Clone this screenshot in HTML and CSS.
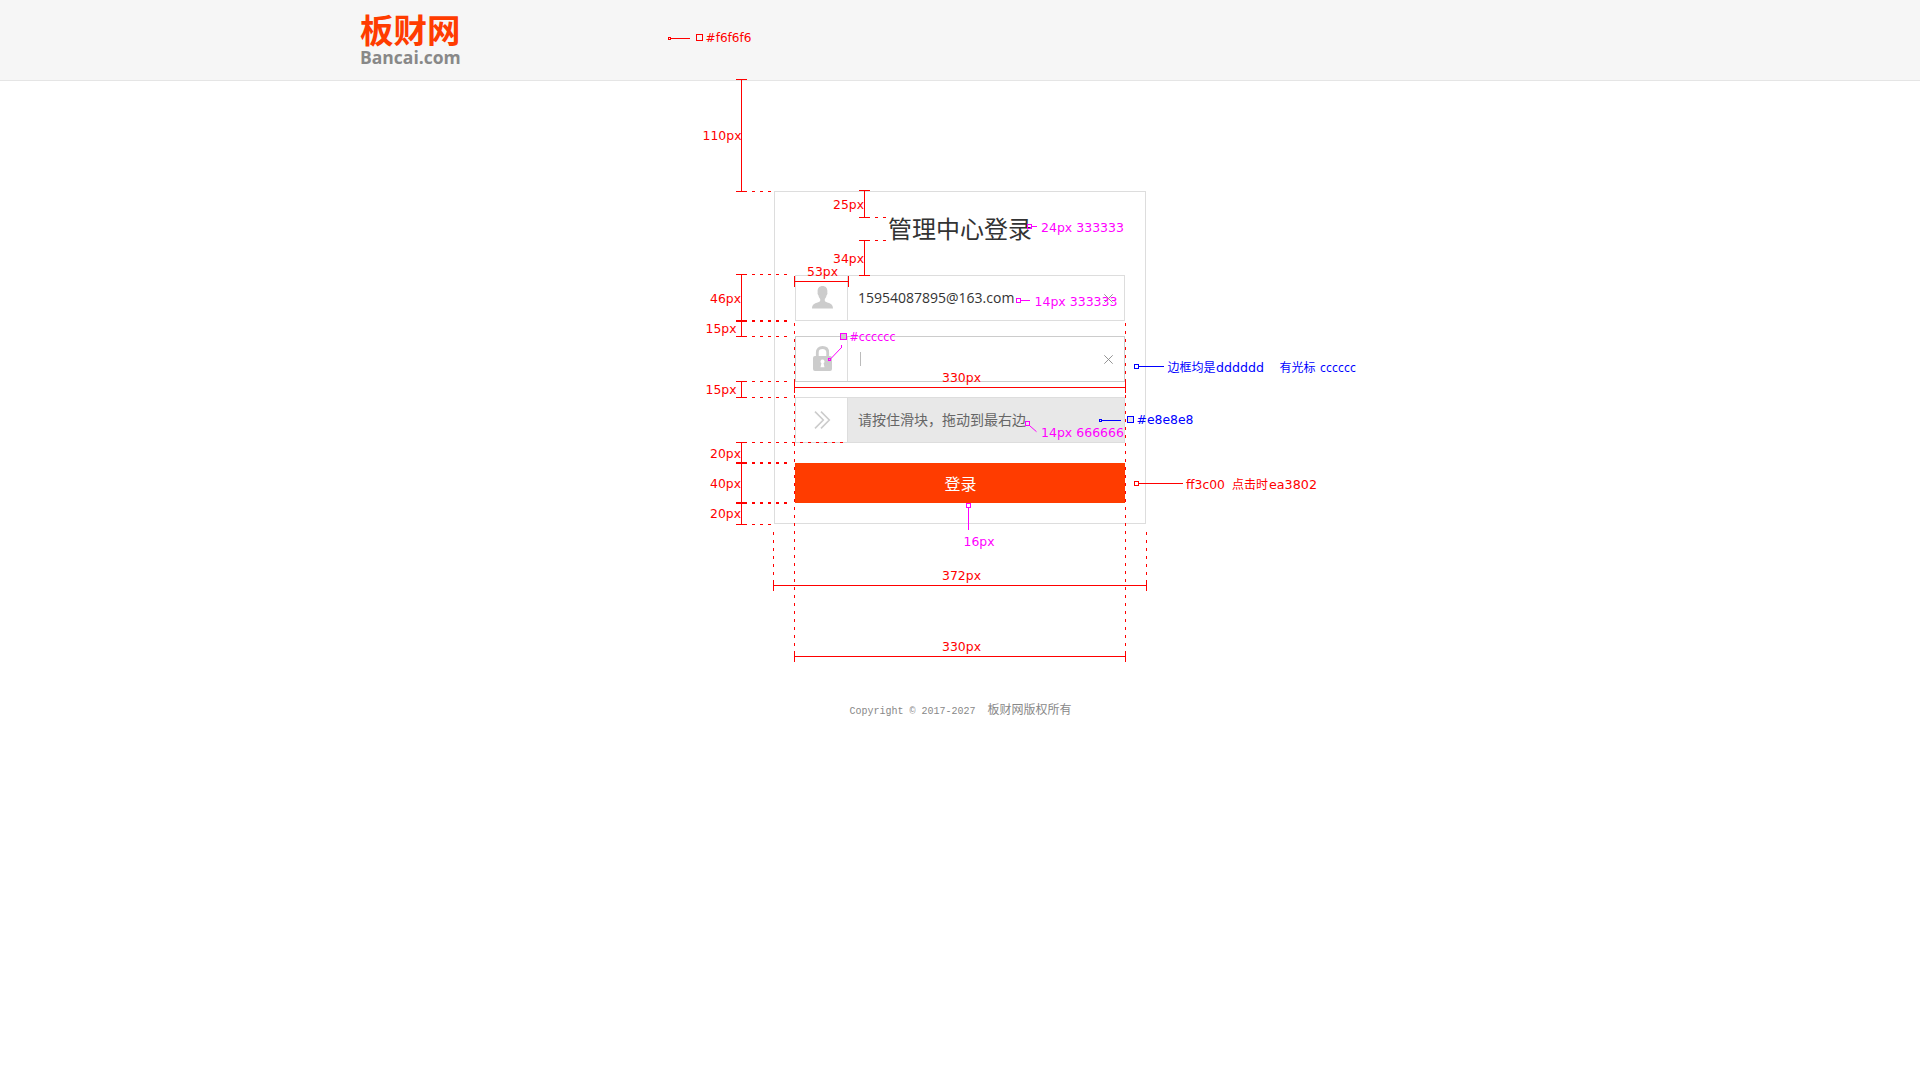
FILE: index.html
```html
<!DOCTYPE html>
<html lang="zh-CN">
<head>
<meta charset="utf-8">
<title>管理中心登录</title>
<link rel="stylesheet" href="styles.css">
</head>
<body>
<header class="header">
  <div class="container">
    <div class="logo">
      <span class="logo-name">板财网</span>
      <span class="logo-domain">Bancai.com</span>
    </div>
  </div>
</header>

<main class="login">
  <h1 class="login-title">管理中心登录</h1>
  <div class="field">
    <span class="field-icon">
      <svg width="21" height="23" viewBox="0 0 21 23"><path fill="#ccc" d="M10.5 0C7.300 0 5.500 2.200 5.600 5.300c.1 1 .1 1.400-.1 2 .1 1.100.5 1.800 1 2.200.3 1.700.9 2.700 1.700 3.500v1.800c-.5 1-1.700 1.500-3.200 2C2 17.800.300 18.500 0 22.500h21c-.3-4-2-4.700-5-5.700-1.500-.5-2.700-1-3.200-2V13c.8-.8 1.400-1.800 1.700-3.500.5-.4.900-1.100 1-2.200-.2-.6-.2-1-.1-2C15.500 2.200 13.700 0 10.500 0z"/></svg>
    </span>
    <span class="field-value">15954087895@163.com</span>
    <svg class="clear" width="9" height="9" viewBox="0 0 9 9"><path d="M.3.3l8.400 8.400M8.700.3L.3 8.700"/></svg>
  </div>
  <div class="field field-focus">
    <span class="field-icon">
      <svg width="19" height="25" viewBox="0 0 19 25"><path fill="none" stroke="#ccc" stroke-width="2.800" d="M4.300 11V6.500c0-3.300 2-5 5.200-5s5.200 1.700 5.200 5V11"/><path fill="#ccc" fill-rule="evenodd" d="M2 10h15q2 0 2 2v11q0 2-2 2H2q-2 0-2-2V12q0-2 2-2zM9.500 13.500a2 2 0 0 0-1.100 3.700L7.500 21.300h4l-.9-4.100A2 2 0 0 0 9.500 13.500z"/></svg>
    </span>
    <span class="field-value"><i class="caret"></i></span>
    <svg class="clear" width="9" height="9" viewBox="0 0 9 9"><path d="M.3.3l8.400 8.400M8.700.3L.3 8.700"/></svg>
  </div>
  <div class="field field-slider">
    <span class="field-icon slider-handle">
      <svg width="17" height="18" viewBox="0 0 17 18"><path fill="none" stroke="#ccc" stroke-width="1.600" d="M1 .6L9.300 9 1 17.400M7 .6L15.300 9 7 17.400"/></svg>
    </span>
    <span class="field-value">请按住滑块，拖动到最右边</span>
  </div>
  <button class="submit" type="button">登录</button>
</main>

<footer class="footer"><span class="footer-latin">Copyright © 2017-2027&nbsp; </span>板财网版权所有</footer>

<svg class="notes" width="1920" height="1080" viewBox="0 0 1920 1080">
  <g class="lines red">
    <path d="M741.5 79V192M736 79.5h11M736 191.500h11"/>
    <path d="M864.5 190v28M859 190.500h11M859 217.500h11"/>
    <path d="M864.5 240v36M859 240.500h11M859 275.500h11"/>
    <path d="M794 281.500h55M794.5 276v11M848.5 276v11"/>
    <path d="M741.5 274v63M736 274.500h11M736 320.500h11M736 321.500h11M736 336.500h11"/>
    <path d="M741.5 381v17M736 381.500h11M736 397.500h11"/>
    <path d="M741.5 442v83M736 442.500h11M736 462.500h11M736 463.500h11M736 502.500h11M736 503.500h11M736 524.500h11"/>
    <path d="M794 387.500h332M794.5 382v11M1125.500 380v13"/>
    <path d="M773 585.500h374M773.5 580v11M1146.500 580v11"/>
    <path d="M794 656.500h332M794.5 651v11M1125.500 651v11"/>
    <path class="dash" d="M744 191.500h27M867 217.500h19M867 240.500h19M744 274.500h43M744 320.500h43M744 321.500h43M744 336.500h43M744 381.500h43M744 397.500h43M744 442.500h99M744 462.500h43M744 463.500h43M744 502.500h43M744 503.500h43M744 524.500h27"/>
    <path class="dash" d="M794.5 323v328M1125.500 323v328M773.5 532v48M1146.500 532v48"/>
    <path d="M668.5 37.500h2v2h-2zM671 38.500h19M696.500 34.500h6v6h-6z"/>
    <path d="M1134.500 481.500h4v4h-4zM1139 483.500h44"/>
  </g>
  <g class="lines magenta">
    <path d="M1027.500 224.500h4v4h-4zM1032 226.500h5"/>
    <path d="M1016.500 298.500h4v4h-4zM1021 300.500h9"/>
    <path d="M828.5 358.500h2v2h-2zM841.5 348V345"/>
    <path class="diagonal" d="M831 358.500L841.500 347.500"/>
    <path fill="#ccc" d="M840.5 333.500h6v6h-6z"/>
    <path d="M1025.500 421.500h4v4h-4z"/>
    <path class="diagonal" d="M1030 426L1036.500 431.700"/>
    <path d="M966.500 503.500h4v4h-4zM968.500 508v22"/>
  </g>
  <g class="lines blue">
    <path d="M1134.500 364.500h4v4h-4zM1139 366.500h25"/>
    <path d="M1099.500 419.500h2v2h-2zM1102 420.500h19"/>
    <path fill="#e8e8e8" d="M1127.500 416.500h6v6h-6z"/>
  </g>
  <g class="labels red-text">
    <text x="705.500" y="42" textLength="46" lengthAdjust="spacingAndGlyphs">#f6f6f6</text>
    <text x="702.500" y="140" textLength="39" lengthAdjust="spacingAndGlyphs">110px</text>
    <text x="833" y="209" textLength="31" lengthAdjust="spacingAndGlyphs">25px</text>
    <text x="833" y="263" textLength="31" lengthAdjust="spacingAndGlyphs">34px</text>
    <text x="807" y="276" textLength="31" lengthAdjust="spacingAndGlyphs">53px</text>
    <text x="710" y="303" textLength="31" lengthAdjust="spacingAndGlyphs">46px</text>
    <text x="705.500" y="333" textLength="31" lengthAdjust="spacingAndGlyphs">15px</text>
    <text x="705.500" y="394" textLength="31" lengthAdjust="spacingAndGlyphs">15px</text>
    <text x="710" y="458" textLength="31" lengthAdjust="spacingAndGlyphs">20px</text>
    <text x="710" y="488" textLength="31" lengthAdjust="spacingAndGlyphs">40px</text>
    <text x="710" y="518" textLength="31" lengthAdjust="spacingAndGlyphs">20px</text>
    <text x="942" y="382" textLength="39" lengthAdjust="spacingAndGlyphs">330px</text>
    <text x="942" y="580" textLength="39" lengthAdjust="spacingAndGlyphs">372px</text>
    <text x="942" y="651" textLength="39" lengthAdjust="spacingAndGlyphs">330px</text>
    <text x="1186" y="489" textLength="39" lengthAdjust="spacingAndGlyphs">ff3c00</text>
    <text class="cjk" x="1232" y="489">点击时</text>
    <text x="1269" y="489" textLength="48" lengthAdjust="spacingAndGlyphs">ea3802</text>
  </g>
  <g class="labels magenta-text">
    <text x="1041" y="232" textLength="83" lengthAdjust="spacingAndGlyphs">24px 333333</text>
    <text x="1034.500" y="306" textLength="83" lengthAdjust="spacingAndGlyphs">14px 333333</text>
    <text x="849.500" y="341" textLength="46" lengthAdjust="spacingAndGlyphs">#cccccc</text>
    <text x="1041" y="437" textLength="83" lengthAdjust="spacingAndGlyphs">14px 666666</text>
    <text x="963.500" y="546" textLength="31" lengthAdjust="spacingAndGlyphs">16px</text>
  </g>
  <g class="labels blue-text">
    <text class="cjk" x="1167.500" y="372">边框均是</text>
    <text x="1216" y="372" textLength="48" lengthAdjust="spacingAndGlyphs">dddddd</text>
    <text class="cjk" x="1279.500" y="372">有光标</text>
    <text x="1320" y="372" textLength="36" lengthAdjust="spacingAndGlyphs">cccccc</text>
    <text x="1136.500" y="424" textLength="57" lengthAdjust="spacingAndGlyphs">#e8e8e8</text>
  </g>
</svg>
</body>
</html>
```
FILE: styles.css
```css
* { box-sizing: border-box; }

body {
  margin: 0;
  height: 1080px;
  overflow: hidden;
  position: relative;
  background: #fff;
  color: #333;
  font-family: "Open Sans", "Noto Sans CJK SC", sans-serif;
}

.header {
  height: 81px;
  background: #f6f6f6;
  border-bottom: 1px solid #e5e5e5;
}

.container {
  width: 1200px;
  margin: 0 auto;
}

.logo {
  display: flex;
  flex-direction: column;
  width: 110px;
  padding-top: 10px;
  white-space: nowrap;
}

.logo-name {
  font: bold 33.5px/38px "Noto Sans CJK SC", sans-serif;
  color: #ff3c00;
}

.logo-domain {
  font: bold 17.5px/19px "Open Sans", sans-serif;
  color: #888;
}

.login {
  display: flex;
  flex-direction: column;
  width: 372px;
  height: 333px;
  margin: 110px auto 0;
  padding: 18px 20px 20px;
  border: 1px solid #ddd;
}

.login-title {
  margin: 0 0 29px;
  font: 400 24px/36px "Noto Sans CJK SC", sans-serif;
  text-align: center;
}

.field {
  display: flex;
  align-items: center;
  height: 46px;
  margin-bottom: 15px;
  border: 1px solid #ddd;
  font-size: 14px;
}

.field-focus { border-color: #ccc; }

.field-slider {
  margin-bottom: 20px;
  background: #e8e8e8;
  color: #666;
  font-family: "Noto Sans CJK SC", sans-serif;
}

.field-icon {
  display: flex;
  align-items: center;
  justify-content: center;
  width: 52px;
  height: 44px;
  padding: 0 0 2px 2px;
  border-right: 1px solid #ddd;
}

.slider-handle { background: #fff; padding: 0 0 0 2px; }

.field-value {
  flex: 1;
  padding: 0 0 2px 10px;
}

.caret {
  display: block;
  width: 1px;
  height: 14px;
  margin: 2px 0 0 2px;
  background: #bbb;
}

.clear {
  margin-right: 11px;
  fill: none;
  stroke: #888;
  stroke-width: 0.9;
}

.submit {
  height: 40px;
  padding: 0 0 0 1px;
  border: 0;
  background: #ff3c00;
  color: #fff;
  font: 400 16px/40px "Noto Sans CJK SC", sans-serif;
}

.footer {
  margin-top: 175px;
  padding-left: 1px;
  text-align: center;
  color: #888;
  font: 12px/20px "Noto Sans CJK SC", sans-serif;
}

.footer-latin {
  font: 10px/20px "Liberation Mono", monospace;
  white-space: pre;
}

.notes {
  position: absolute;
  left: 0;
  top: 0;
}

.lines { fill: none; stroke-width: 1; shape-rendering: crispEdges; }
.diagonal { shape-rendering: auto; }
.dash { stroke-dasharray: 3 5; }
.red { stroke: #f00; }
.magenta { stroke: #f0f; }
.blue { stroke: #00f; }

.labels { font: 12.5px "DejaVu Sans", "Noto Sans CJK SC", sans-serif; }
.cjk { font: 12px "Noto Sans CJK SC", sans-serif; }
.red-text { fill: #f00; }
.magenta-text { fill: #f0f; }
.blue-text { fill: #00f; }
```
